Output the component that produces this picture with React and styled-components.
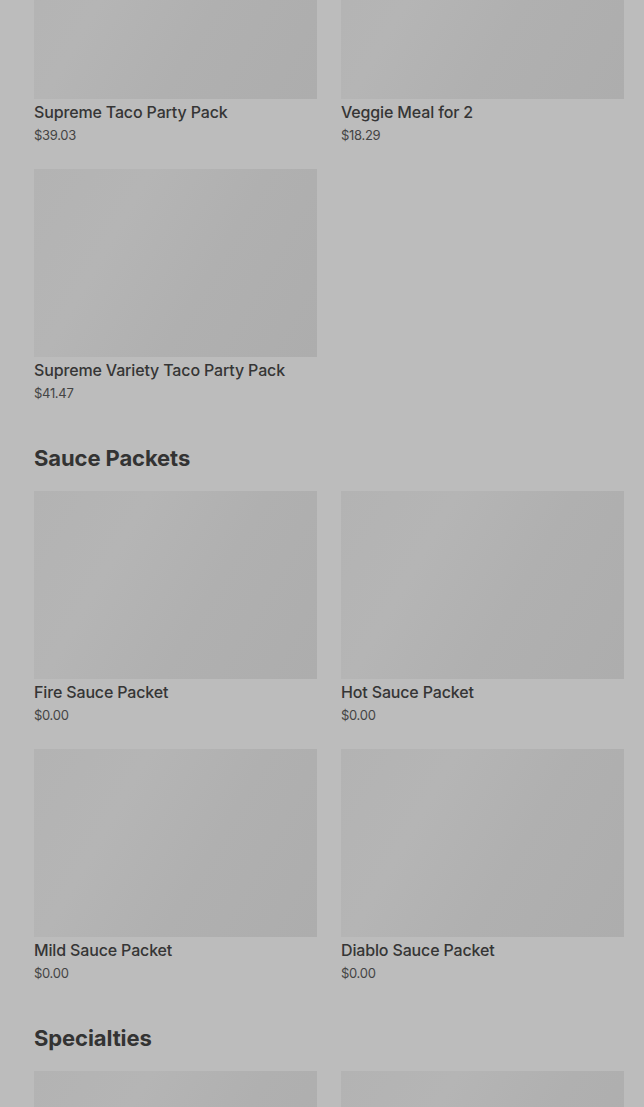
import React from 'react';
import styled, { createGlobalStyle } from 'styled-components';

const GlobalStyle = createGlobalStyle`
    html, body {
        margin: 0;
        padding: 0;
        background: #bcbcbc;
        overflow: hidden;
    }
    body {
        font-family: Inter, "Noto Sans", "Liberation Sans", sans-serif;
        color: #333333;
    }
`;

const Page = styled.div`
    padding: 0 20px 0 34px;
    margin-top: -89px;
`;

const Section = styled.section`
    padding-top: ${props => (props.first ? '0' : '39px')};
`;

const SectionTitle = styled.h2`
    margin: 0 0 17px;
    font-size: 22px;
    line-height: 32px;
    font-weight: 700;
    letter-spacing: -0.1px;
    color: #333333;
`;

const Grid = styled.div`
    display: grid;
    grid-template-columns: 1fr 1fr;
    column-gap: 24px;
    row-gap: 24px;
`;

const Card = styled.div`
    display: flex;
    flex-direction: column;
`;

const Thumb = styled.div`
    height: 188px;
    background: linear-gradient(120deg, #b3b3b3 0%, #b5b5b5 30%, #b0b0b0 60%, #adadad 100%);
`;

const ItemName = styled.div`
    margin-top: 3px;
    font-size: 16px;
    line-height: 20px;
    font-weight: 500;
    letter-spacing: -0.15px;
    color: #353535;
`;

const ItemPrice = styled.div`
    margin-top: 3px;
    font-size: 13px;
    line-height: 20px;
    letter-spacing: -0.3px;
    color: #444444;
`;

const sections = [
    {
        title: null,
        items: [
            { name: 'Supreme Taco Party Pack', price: '$39.03' },
            { name: 'Veggie Meal for 2', price: '$18.29' },
            { name: 'Supreme Variety Taco Party Pack', price: '$41.47' },
        ],
    },
    {
        title: 'Sauce Packets',
        items: [
            { name: 'Fire Sauce Packet', price: '$0.00' },
            { name: 'Hot Sauce Packet', price: '$0.00' },
            { name: 'Mild Sauce Packet', price: '$0.00' },
            { name: 'Diablo Sauce Packet', price: '$0.00' },
        ],
    },
    {
        title: 'Specialties',
        items: [
            { name: 'Mexican Pizza', price: '$5.49' },
            { name: 'Crunchwrap Supreme', price: '$5.19' },
        ],
    },
];

function App() {
    return (
        <>
            <GlobalStyle />
            <Page>
                {sections.map((section, i) => (
                    <Section key={i} first={i === 0}>
                        {section.title && <SectionTitle>{section.title}</SectionTitle>}
                        <Grid>
                            {section.items.map(item => (
                                <Card key={item.name}>
                                    <Thumb />
                                    <ItemName>{item.name}</ItemName>
                                    <ItemPrice>{item.price}</ItemPrice>
                                </Card>
                            ))}
                        </Grid>
                    </Section>
                ))}
            </Page>
        </>
    );
}

export default App;
